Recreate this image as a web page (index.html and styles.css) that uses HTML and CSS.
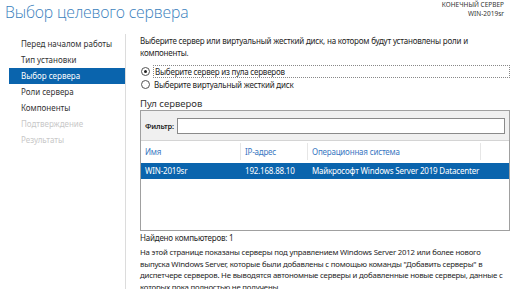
FILE: index.html
```html
<!DOCTYPE html>
<html lang="ru">
<head>
  <meta charset="UTF-8" />
  <title>Мастер добавления ролей и компонентов</title>
  <link rel="stylesheet" href="styles.css">
</head>
<body>
  <div class="header">
    <h1>Выбор целевого сервера</h1>
    <div class="target">
      <div>КОНЕЧНЫЙ СЕРВЕР</div>
      <div>WIN-2019sr</div>
    </div>
  </div>

  <div class="main">
    <ul class="nav">
      <li>Перед началом работы</li>
      <li>Тип установки</li>
      <li class="active">Выбор сервера</li>
      <li>Роли сервера</li>
      <li>Компоненты</li>
      <li class="disabled">Подтверждение</li>
      <li class="disabled">Результаты</li>
    </ul>

    <div class="content">
      <p class="intro">Выберите сервер или виртуальный жесткий диск, на котором будут установлены роли и компоненты.</p>

      <div class="radio-row focused">
        <span class="radio checked"></span>
        <span class="radio-label">Выберите сервер из пула серверов</span>
      </div>
      <div class="radio-row">
        <span class="radio"></span>
        <span class="radio-label">Выберите виртуальный жесткий диск</span>
      </div>

      <div class="pool-title">Пул серверов</div>
      <div class="pool">
        <div class="filter">
          <span>Фильтр:</span>
          <div class="filter-input"></div>
        </div>
        <div class="row head">
          <div class="col name">Имя</div>
          <div class="col ip">IP-адрес</div>
          <div class="col os">Операционная система</div>
        </div>
        <div class="row selected">
          <div class="col name">WIN-2019sr</div>
          <div class="col ip">192.168.88.10</div>
          <div class="col os">Майкрософт Windows Server 2019 Datacenter</div>
        </div>
      </div>

      <div class="found">Найдено компьютеров: 1</div>
      <p class="note">На этой странице показаны серверы под управлением Windows Server 2012 или более нового выпуска Windows Server, которые были добавлены с помощью команды "Добавить серверы" в диспетчере серверов. Не выводятся автономные серверы и добавленные новые серверы, данные с которых пока полностью не получены.</p>
    </div>
  </div>
</body>
</html>
```

FILE: styles.css
```css
* {
  box-sizing: border-box;
  margin: 0;
  padding: 0;
}
body {
  background: #fff;
  font-family: 'Noto Sans', sans-serif;
  font-size: 8px;
  color: #1e1e1e;
  width: 516px;
  height: 289px;
  overflow: hidden;
}
.header {
  display: flex;
  justify-content: space-between;
  height: 34px;
}
h1 {
  font-family: 'Open Sans', sans-serif;
  font-weight: 300;
  font-size: 15.8px;
  letter-spacing: -0.2px;
  color: #3b7fbd;
  padding: 1px 0 0 5px;
  line-height: 22px;
}
.target {
  text-align: right;
  font-size: 6.5px;
  line-height: 9px;
  padding: 0 12px 0 0;
  color: #333;
}
.main {
  display: flex;
}
.nav {
  list-style: none;
  width: 127px;
  padding: 2px 0 0 9px;
  border-right: 1px solid #dcdcdc;
  height: 260px;
}
.nav li {
  height: 16px;
  line-height: 16px;
  padding-left: 12px;
  color: #333;
}
.nav li.active {
  background: #0a64ad;
  color: #fff;
}
.nav li.disabled {
  color: #c8c8c8;
}
.content {
  flex: 1;
  padding: 1px 6px 0 14px;
  letter-spacing: -0.2px;
}
.intro {
  line-height: 12px;
  width: 348px;
  margin-bottom: 6px;
}
.radio-row {
  display: flex;
  align-items: center;
  height: 13px;
  padding-left: 1px;
}
.radio {
  width: 9px;
  height: 9px;
  border: 1px solid #555;
  border-radius: 50%;
  margin-right: 3px;
  position: relative;
}
.radio.checked::after {
  content: '';
  position: absolute;
  left: 2px;
  top: 2px;
  width: 3px;
  height: 3px;
  border-radius: 50%;
  background: #222;
}
.radio-label {
  padding: 0 1px;
  line-height: 11px;
}
.focused .radio-label {
  flex: 1;
  border: 1px dotted #888;
}
.pool-title {
  font-size: 9.5px;
  margin-top: 7px;
  line-height: 12px;
  color: #333;
  letter-spacing: 0;
}
.pool {
  border: 1px solid #a0a0a0;
  height: 121px;
  width: 370px;
}
.filter {
  display: flex;
  align-items: center;
  background: #f0f0f0;
  height: 30px;
  padding: 0 4px;
  border-bottom: 1px solid #d4d4d4;
  font-weight: 600;
  font-size: 7.5px;
}
.filter-input {
  flex: 1;
  height: 16px;
  margin-left: 3px;
  background: #fff;
  border: 1px solid #8a8a8a;
}
.row {
  display: flex;
  height: 16px;
  line-height: 16px;
}
.row.head {
  height: 21px;
  color: #3a78c2;
}
.row.head .col {
  border-right: 1px solid #e6e6e6;
  margin: 2px 0;
  line-height: 17px;
}
.row.selected {
  background: #0a64ad;
  color: #fff;
  margin-top: 1px;
}
.col {
  padding-left: 4px;
  white-space: nowrap;
}
.name {
  width: 100px;
}
.ip {
  width: 67px;
}
.os {
  width: 173px;
}
.found {
  line-height: 13px;
}
.note {
  margin-top: 3px;
  font-size: 7.8px;
  line-height: 11.5px;
  width: 364px;
}
```
